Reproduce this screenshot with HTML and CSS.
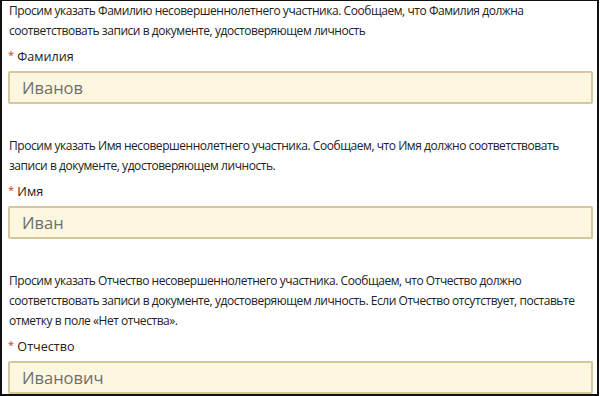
FILE: index.html
```html
<!DOCTYPE html>
<html lang="ru">
<head>
  <meta charset="UTF-8" />
  <title>Анкета участника</title>
  <link rel="stylesheet" href="styles.css">
</head>
<body>
  <div class="form">

    <div class="field">
      <p class="hint">Просим указать Фамилию несовершеннолетнего участника. Сообщаем, что Фамилия должна соответствовать записи в документе, удостоверяющем личность</p>
      <label class="label"><span class="req">*</span> Фамилия</label>
      <div class="input">Иванов</div>
    </div>

    <div class="field">
      <p class="hint">Просим указать Имя несовершеннолетнего участника. Сообщаем, что Имя должно соответствовать записи в документе, удостоверяющем личность.</p>
      <label class="label"><span class="req">*</span> Имя</label>
      <div class="input">Иван</div>
    </div>

    <div class="field">
      <p class="hint">Просим указать Отчество несовершеннолетнего участника. Сообщаем, что Отчество должно соответствовать записи в документе, удостоверяющем личность. Если Отчество отсутствует, поставьте отметку в поле «Нет отчества».</p>
      <label class="label"><span class="req">*</span> Отчество</label>
      <div class="input">Иванович</div>
    </div>

  </div>
</body>
</html>
```

FILE: styles.css
```css
body {
  margin: 0;
  font-family: "Open Sans", sans-serif;
  color: #222;
  background: #fff;
}

.form {
  width: 599px;
  height: 396px;
  border: 2px solid #111;
  border-top-width: 1px;
  padding: 0 4px 0 6px;
  box-sizing: border-box;
  overflow: hidden;
}

.field {
  margin-bottom: 32px;
}

.hint {
  margin: 0 -4px 6px 0;
  font-size: 12px;
  line-height: 20px;
  letter-spacing: -0.45px;
  padding-left: 1px;
}

.label {
  display: block;
  height: 20px;
  font-size: 12.6px;
  line-height: 20px;
  margin-bottom: 4px;
}

.req {
  color: #c0392b;
  font-size: 11px;
  line-height: 0;
  vertical-align: 2px;
}

.input {
  height: 33px;
  box-sizing: border-box;
  border: 2px solid #d6c79f;
  border-radius: 2px;
  background: #fef7e0;
  padding: 0 12px;
  font-size: 16.5px;
  line-height: 29px;
  color: #6e6e6e;
}
```
